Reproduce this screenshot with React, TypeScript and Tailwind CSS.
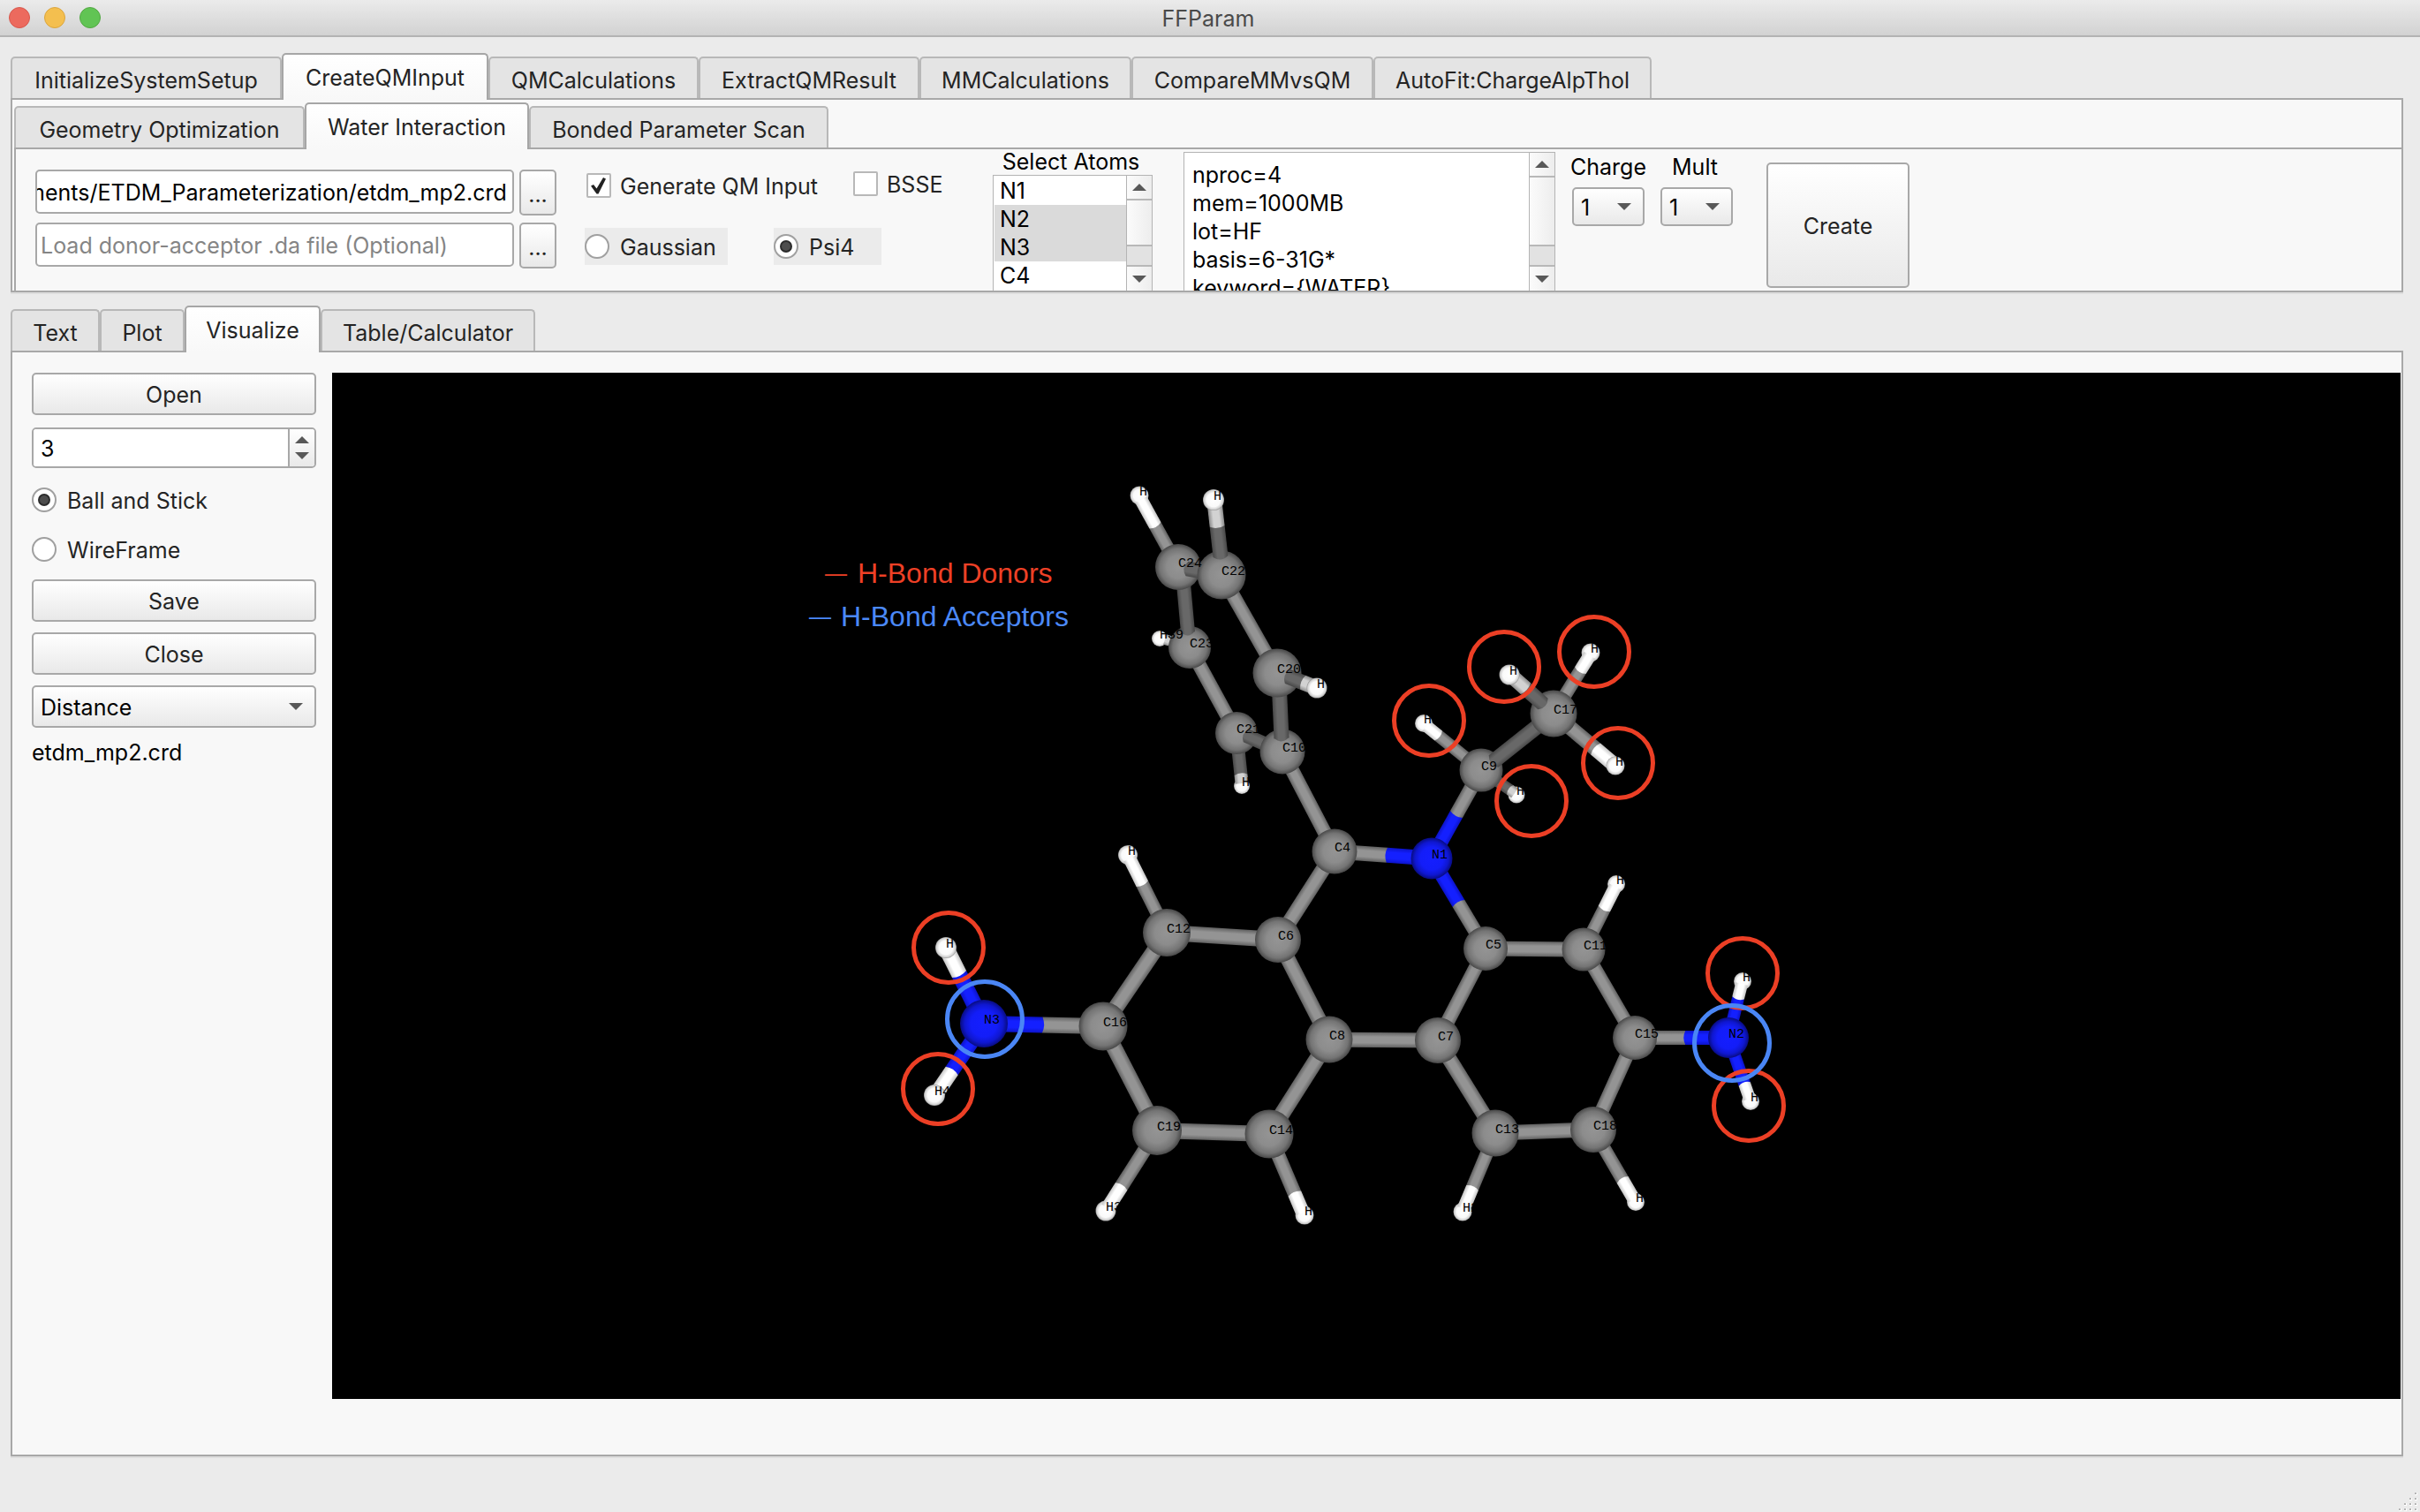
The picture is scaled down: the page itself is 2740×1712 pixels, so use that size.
import React, { useLayoutEffect, useRef } from "react";

/* ---------- Shared controls ---------- */

type Tab = { label: string; width: string };

function TabBar({ tabs, active, label }: { tabs: Tab[]; active: number; label: string }) {
  return (
    <div role="tablist" aria-label={label} className="relative z-10 -mb-[2px] flex h-[53px] items-end">
      {tabs.map((t, i) =>
        i === active ? (
          <button
            key={t.label}
            role="tab"
            aria-selected="true"
            className={`${t.width} relative z-10 h-[53px] rounded-t-[5px] border-2 border-b-0 border-[#a6a6a6] bg-linear-to-b from-white to-[#f8f8f8] text-center whitespace-nowrap`}
          >
            {t.label}
          </button>
        ) : (
          <button
            key={t.label}
            role="tab"
            aria-selected="false"
            className={`${t.width} mb-[2px] h-[47px] rounded-t-[5px] border-2 border-b-0 border-[#b8b8b8] bg-[#e4e4e4] pt-1 text-center whitespace-nowrap`}
          >
            {t.label}
          </button>
        )
      )}
    </div>
  );
}

function PushButton({ children, className }: { children: React.ReactNode; className: string }) {
  return (
    <button
      className={`${className} shrink-0 rounded-[5px] border-2 border-[#a8a8a8] bg-linear-to-b from-white to-[#e9e9e9]`}
    >
      {children}
    </button>
  );
}

function Arrow({ up }: { up?: boolean }) {
  return (
    <svg width="16" height="8" viewBox="0 0 16 8" className="pointer-events-none block" aria-hidden="true">
      <path d={up ? "M0 8 8 0l8 8z" : "M0 0h16L8 8z"} fill="#585858" />
    </svg>
  );
}

function Check({ id, label, checked }: { id: string; label: string; checked?: boolean }) {
  return (
    <label htmlFor={id} className="flex h-7 items-center gap-[10px] whitespace-nowrap">
      <span className="relative block size-7 shrink-0">
        <input
          id={id}
          type="checkbox"
          defaultChecked={checked}
          className="peer block size-7 appearance-none rounded-[2px] border-2 border-[#b8b8b8] bg-white"
        />
        <svg
          viewBox="0 0 28 28"
          className="pointer-events-none absolute inset-0 hidden size-7 peer-checked:block"
          aria-hidden="true"
        >
          <path d="M5 14.500 8 13l3.500 4.500L19 5l3 1.500-8.500 17h-2z" fill="#222" />
        </svg>
      </span>
      <span className="pt-[2px]">{label}</span>
    </label>
  );
}

function Radio({
  id,
  name,
  label,
  checked,
  className,
}: {
  id: string;
  name: string;
  label: string;
  checked?: boolean;
  className: string;
}) {
  return (
    <label htmlFor={id} className={`${className} flex items-center gap-[12px] whitespace-nowrap`}>
      <span className="relative block size-7 shrink-0">
        <input
          id={id}
          name={name}
          type="radio"
          defaultChecked={checked}
          className="peer block size-7 appearance-none rounded-full border-2 border-[#a0a0a0] bg-white"
        />
        <span className="pointer-events-none absolute inset-[7px] hidden rounded-full border-2 border-[#2c2c2c] bg-[#4d4d4d] peer-checked:block" />
      </span>
      <span className="pt-[2px]">{label}</span>
    </label>
  );
}

function Combo({ id, options, label, className }: { id: string; options: string[]; label: string; className: string }) {
  return (
    <div className={`${className} relative shrink-0`}>
      <select
        id={id}
        aria-label={label}
        className="block size-full appearance-none rounded-[5px] border-2 border-[#a8a8a8] bg-linear-to-b from-white to-[#e9e9e9] pt-[2px] pl-2 text-black"
      >
        {options.map((o) => (
          <option key={o}>{o}</option>
        ))}
      </select>
      <span className="pointer-events-none absolute inset-y-0 right-[15px] flex items-center">
        <Arrow />
      </span>
    </div>
  );
}

function ScrollBar({ className }: { className: string }) {
  return (
    <div className={`${className} flex w-[29px] shrink-0 flex-col border-l border-[#b4b4b4] bg-linear-to-r from-[#fbfbfb] to-[#ededed]`}>
      <button aria-label="Scroll up" className="flex h-[28px] items-center justify-center border-b-2 border-[#b8b8b8]">
        <Arrow up />
      </button>
      <div className="flex-1" />
      <div className="h-[25px] border-y-2 border-[#b8b8b8] bg-[#e2e2e2]" />
      <button aria-label="Scroll down" className="flex h-[28px] items-center justify-center">
        <Arrow />
      </button>
    </div>
  );
}

/* ---------- Molecule ---------- */

type Atom = { el: "C" | "N" | "H"; x: number; y: number; r: number; label: string };
type Shade = "gray" | "dark" | "white" | "dim" | "blue";
type Bond = {
  from: [number, number];
  to: [number, number];
  w: number;
  /* shade at each end and where along the bond the shade changes */
  a: Shade;
  b?: Shade;
  split?: number;
};

const atom = (el: Atom["el"], x: number, y: number, r: number, label: string): Atom => ({ el, x, y, r, label });
const bond = (
  from: [number, number],
  to: [number, number],
  w: number,
  a: Shade,
  b?: Shade,
  split = 0.5
): Bond => ({ from, to, w, a, b, split });

/* Back-to-front drawing order. */
const SCENE: (Atom | Bond)[] = [
  // planar ring bonds
  bond([1511, 964], [1621, 972], 17, "gray", "blue", 0.54),
  bond([1511, 964], [1447, 1064], 17, "gray"),
  bond([1452, 851], [1511, 964], 16, "gray"),
  bond([1447, 1064], [1321, 1056], 18, "gray"),
  bond([1447, 1064], [1505, 1177], 17, "gray"),
  bond([1321, 1056], [1249, 1162], 18, "gray"),
  bond([1249, 1162], [1310, 1280], 18, "gray"),
  bond([1310, 1280], [1437, 1284], 18, "gray"),
  bond([1437, 1284], [1505, 1177], 18, "gray"),
  bond([1505, 1177], [1628, 1178], 17, "gray"),
  bond([1628, 1178], [1682, 1074], 16, "gray"),
  bond([1628, 1178], [1693, 1283], 17, "gray"),
  bond([1693, 1283], [1804, 1279], 17, "gray"),
  bond([1804, 1279], [1851, 1175], 16, "gray"),
  bond([1851, 1175], [1793, 1075], 16, "gray"),
  bond([1793, 1075], [1682, 1074], 17, "gray"),
  bond([1621, 972], [1682, 1074], 16, "blue", "gray", 0.5),
  bond([1621, 972], [1677, 872], 16, "blue", "gray", 0.5),
  bond([1249, 1162], [1114, 1159], 18, "gray", "blue", 0.51),
  bond([1851, 1175], [1957, 1175], 16, "gray", "blue", 0.54),
  // hydrogens that sit behind their bonds
  atom("H", 1290, 561, 10.5, "H"),
  atom("H", 1313, 723, 9, "H39"),
  atom("H", 1406, 890, 9, "H"),
  atom("H", 1612, 819, 10, "H"),
  atom("H", 1801, 739, 10.5, "H"),
  atom("H", 1717, 900, 9.5, "H"),
  atom("H", 1830, 1001, 10, "H"),
  atom("H", 1277, 968, 11, "H"),
  atom("H", 1973, 1111, 10, "H"),
  atom("H", 1852, 1361, 10, "H"),
  atom("H", 1982, 1247, 10, "H"),
  atom("H", 1656, 1372, 10.5, "H2"),
  atom("H", 1252, 1371, 11.5, "H3"),
  atom("H", 1477, 1376, 10.5, "H"),
  bond([1334, 642], [1292, 566], 15, "gray", "white", 0.62),
  bond([1347, 733], [1319, 724], 12, "dark", "dim", 0.82),
  bond([1400, 830], [1406, 887], 15, "dark", "dim", 0.83),
  bond([1677, 872], [1615, 822], 14, "gray", "white", 0.78),
  bond([1759, 808], [1800, 742], 15, "gray", "white", 0.74),
  bond([1677, 872], [1715, 898], 13, "dark", "dim", 0.86),
  bond([1793, 1075], [1829, 1004], 15, "gray", "white", 0.65),
  bond([1321, 1056], [1279, 972], 15, "gray", "white", 0.66),
  bond([1957, 1175], [1972, 1114], 14, "blue", "white", 0.74),
  bond([1957, 1175], [1981, 1244], 14, "blue", "white", 0.76),
  bond([1804, 1279], [1850, 1358], 15, "gray", "white", 0.72),
  bond([1693, 1283], [1657, 1369], 15, "gray", "white", 0.72),
  bond([1310, 1280], [1254, 1368], 16, "gray", "white", 0.72),
  bond([1437, 1284], [1475, 1373], 16, "gray", "white", 0.76),
  bond([1114, 1159], [1071, 1073], 18, "blue", "white", 0.65),
  bond([1114, 1159], [1059, 1240], 17, "blue", "white", 0.66),
  bond([1759, 808], [1829, 867], 17, "gray", "white", 0.68),
  atom("H", 1071, 1073, 12, "H"),
  atom("H", 1058, 1240, 12, "H4"),
  atom("H", 1829, 867, 10.5, "H"),
  // phenyl group
  bond([1347, 733], [1400, 830], 16, "gray"),
  atom("C", 1347, 733, 24, "C23"),
  bond([1339, 650], [1345, 716], 16, "dark"),
  atom("C", 1334, 642, 26, "C24"),
  bond([1344, 644], [1384, 651], 17, "dark"),
  bond([1383, 651], [1446, 762], 16, "gray"),
  atom("C", 1383, 651, 27.5, "C22"),
  bond([1382, 630], [1375, 568], 17, "dark", "dim", 0.55),
  atom("H", 1374, 566, 12, "H"),
  atom("C", 1400, 830, 24, "C21"),
  bond([1411, 833], [1452, 851], 16, "dark"),
  atom("C", 1452, 851, 25.5, "C10"),
  bond([1448, 770], [1451, 836], 17, "dark"),
  atom("C", 1446, 762, 27.5, "C20"),
  bond([1458, 766], [1491, 779], 17, "dark", "dim", 0.52),
  atom("H", 1491, 779, 11.5, "H"),
  // ethyl group
  atom("C", 1677, 872, 24.5, "C9"),
  bond([1691, 862], [1759, 808], 17, "dark"),
  atom("C", 1759, 808, 26.5, "C17"),
  bond([1747, 797], [1712, 766], 17, "dark", "dim", 0.56),
  atom("H", 1709, 764, 11.5, "H"),
  // fused rings
  atom("C", 1511, 964, 25.5, "C4"),
  atom("N", 1621, 972, 23.5, "N1"),
  atom("C", 1682, 1074, 25, "C5"),
  atom("C", 1793, 1075, 24.5, "C11"),
  atom("C", 1447, 1064, 26, "C6"),
  atom("C", 1321, 1056, 27, "C12"),
  atom("C", 1249, 1162, 27.5, "C16"),
  atom("C", 1310, 1280, 28, "C19"),
  atom("C", 1437, 1284, 27.5, "C14"),
  atom("C", 1505, 1177, 26.5, "C8"),
  atom("C", 1628, 1178, 26, "C7"),
  atom("C", 1693, 1283, 26.5, "C13"),
  atom("C", 1804, 1279, 26, "C18"),
  atom("C", 1851, 1175, 25, "C15"),
  atom("N", 1957, 1175, 23, "N2"),
  atom("N", 1114, 1159, 27, "N3"),
];

const DONORS: [number, number][] = [
  [1618, 816],
  [1703, 755],
  [1805, 738],
  [1832, 864],
  [1734, 907],
  [1973, 1102],
  [1980, 1252],
  [1074, 1073],
  [1062, 1233],
];
const ACCEPTORS: [number, number][] = [
  [1115, 1154],
  [1961, 1181],
];

const SHADES: Record<Shade, [string, string]> = {
  gray: ["#949494", "#606060"],
  dark: ["#686868", "#484848"],
  white: ["#ffffff", "#c4c4c4"],
  dim: ["#d2d2d2", "#8a8a8a"],
  blue: ["#1420ff", "#0c13c8"],
};

function BondShape({ b }: { b: Bond }) {
  const dx = b.to[0] - b.from[0];
  const dy = b.to[1] - b.from[1];
  const len = Math.hypot(dx, dy);
  const angle = (Math.atan2(dy, dx) * 180) / Math.PI;
  const cut = b.b ? len * (b.split ?? 0.5) : len;
  const h = b.w / 2;
  return (
    <g transform={`translate(${b.from[0]} ${b.from[1]}) rotate(${angle})`}>
      <path d={`M0 ${-h}H${cut}V${h}H0Q-7 0 0 ${-h}z`} fill={`url(#bond-${b.a})`} />
      {b.b ? (
        <path d={`M${cut} ${-h}H${len}V${h}H${cut}Q${cut - 4} 0 ${cut} ${-h}z`} fill={`url(#bond-${b.b})`} />
      ) : (
        <path d={`M${cut - 1} ${-h}Q${cut + 8} 0 ${cut - 1} ${h}z`} fill={`url(#bond-${b.a})`} />
      )}
    </g>
  );
}

function Molecule() {
  return (
    <svg viewBox="376 422 2342 1162" className="block h-auto w-full" role="img" aria-label="Ball and stick molecule">
      <defs>
        {(Object.keys(SHADES) as Shade[]).map((k) => (
          <linearGradient key={k} id={`bond-${k}`} x1="0" y1="0" x2="0" y2="1">
            <stop offset="0" stopColor={SHADES[k][1]} />
            <stop offset="0.3" stopColor={SHADES[k][0]} />
            <stop offset="0.7" stopColor={SHADES[k][0]} />
            <stop offset="1" stopColor={SHADES[k][1]} />
          </linearGradient>
        ))}
        <radialGradient id="atom-C">
          <stop offset="0" stopColor="#949494" />
          <stop offset="0.5" stopColor="#8c8c8c" />
          <stop offset="0.8" stopColor="#747474" />
          <stop offset="1" stopColor="#484848" />
        </radialGradient>
        <radialGradient id="atom-N">
          <stop offset="0" stopColor="#141eff" />
          <stop offset="0.55" stopColor="#131df8" />
          <stop offset="0.8" stopColor="#0f17d0" />
          <stop offset="1" stopColor="#080c80" />
        </radialGradient>
        <radialGradient id="atom-H">
          <stop offset="0" stopColor="#ffffff" />
          <stop offset="0.65" stopColor="#fafafa" />
          <stop offset="0.9" stopColor="#d0d0d0" />
          <stop offset="1" stopColor="#949494" />
        </radialGradient>
      </defs>

      {SCENE.map((s, i) =>
        "el" in s ? <circle key={i} cx={s.x} cy={s.y} r={s.r} fill={`url(#atom-${s.el})`} /> : <BondShape key={i} b={s} />
      )}

      <g fill="#000" fontFamily="'Liberation Mono', monospace" fontSize="15">
        {SCENE.map((s, i) =>
          "el" in s ? (
            <text key={i} x={s.x} y={s.y}>
              {s.label}
            </text>
          ) : null
        )}
      </g>

      <g fill="none" stroke="#ec3f25" strokeWidth="5">
        {DONORS.map(([x, y]) => (
          <circle key={`${x}-${y}`} cx={x} cy={y} r="39.500" />
        ))}
      </g>
      <g fill="none" stroke="#4a86f5" strokeWidth="5">
        {ACCEPTORS.map(([x, y]) => (
          <circle key={`${x}-${y}`} cx={x} cy={y} r="42.500" />
        ))}
      </g>

      <g fontFamily="'Liberation Sans', Arial, sans-serif" fontSize="32">
        <g fill="#ee4026">
          <text x="934" y="658" fontSize="25">—</text>
          <text x="971" y="660">H-Bond Donors</text>
        </g>
        <g fill="#4b89f8">
          <text x="916" y="707" fontSize="25">—</text>
          <text x="952" y="709">H-Bond Acceptors</text>
        </g>
      </g>
    </svg>
  );
}

/* ---------- Page ---------- */

const MAIN_TABS: Tab[] = [
  { label: "InitializeSystemSetup", width: "w-[307px]" },
  { label: "CreateQMInput", width: "w-[234px]" },
  { label: "QMCalculations", width: "w-[238px]" },
  { label: "ExtractQMResult", width: "w-[250px]" },
  { label: "MMCalculations", width: "w-[240px]" },
  { label: "CompareMMvsQM", width: "w-[274px]" },
  { label: "AutoFit:ChargeAlpThol", width: "w-[315px]" },
];
const QM_TABS: Tab[] = [
  { label: "Geometry Optimization", width: "w-[329px]" },
  { label: "Water Interaction", width: "w-[254px]" },
  { label: "Bonded Parameter Scan", width: "w-[339px]" },
];
const VIEW_TABS: Tab[] = [
  { label: "Text", width: "w-[101px]" },
  { label: "Plot", width: "w-[96px]" },
  { label: "Visualize", width: "w-[154px]" },
  { label: "Table/Calculator", width: "w-[243px]" },
];

const ATOMS = [
  { name: "N1", on: false },
  { name: "N2", on: true },
  { name: "N3", on: true },
  { name: "C4", on: false },
];

export default function App() {
  const pathRef = useRef<HTMLInputElement>(null);
  useLayoutEffect(() => {
    const el = pathRef.current;
    if (el) el.scrollLeft = el.scrollWidth;
  }, []);

  return (
    <div className="flex min-h-screen flex-col bg-[#ebebeb] font-['Inter',sans-serif] text-[25px] leading-8 text-[#242424]">
      <header className="relative flex h-[42px] items-center justify-center border-b-2 border-[#b3b3b3] bg-linear-to-b from-[#ebebeb] to-[#d2d2d2]">
        <div className="absolute left-[10px] flex gap-4">
          <button aria-label="Close window" className="size-6 rounded-full border border-[#d8574c] bg-[#ec6a5e]" />
          <button aria-label="Minimize window" className="size-6 rounded-full border border-[#dba53c] bg-[#f4bf4f]" />
          <button aria-label="Zoom window" className="size-6 rounded-full border border-[#52a842] bg-[#61c454]" />
        </div>
        <h1 className="pt-[2px] pr-1 text-[#4a4a4a]">FFParam</h1>
      </header>

      <main className="flex flex-1 flex-col pt-[18px] pr-[19px] pb-[63px] pl-[12px]">
        <TabBar tabs={MAIN_TABS} active={1} label="Workflow" />
        <section className="border-2 border-[#a8a8a8] bg-[#f8f8f8] pt-[3px] pl-[2px] shadow-[0_2px_0_#dedede]">
          <TabBar tabs={QM_TABS} active={1} label="QM input" />
          <div className="flex h-[162px] items-start overflow-hidden border-t-2 border-l-2 border-[#a8a8a8]">
            <div className="ml-[22px] flex flex-col gap-2 pt-[23px]">
              <div className="flex items-start gap-[6px]">
                <input
                  ref={pathRef}
                  aria-label="Coordinate file"
                  defaultValue="Documents/ETDM_Parameterization/etdm_mp2.crd"
                  className="h-[50px] w-[542px] rounded-[5px] border-2 border-[#a8a8a8] bg-white pt-[2px] pr-1.5 text-black"
                />
                <PushButton className="h-[52px] w-[42px] pt-1">...</PushButton>
              </div>
              <div className="flex items-start gap-[6px]">
                <input
                  aria-label="Donor-acceptor file"
                  placeholder="Load donor-acceptor .da file (Optional)"
                  className="h-[50px] w-[542px] rounded-[5px] border-2 border-[#a8a8a8] bg-white px-1 pt-[2px] text-black placeholder:text-[#858585]"
                />
                <PushButton className="h-[52px] w-[42px] pt-1">...</PushButton>
              </div>
            </div>

            <div className="ml-[32px] w-[462px] pt-[25px]">
              <div className="flex items-start pl-[2px]">
                <div className="w-[302px] pt-[2px]">
                  <Check id="generate" label="Generate QM Input" checked />
                </div>
                <Check id="bsse" label="BSSE" />
              </div>
              <div className="mt-[34px] flex gap-[52px]">
                <Radio id="gaussian" name="program" label="Gaussian" className="h-[42px] w-[162px] bg-[#ebebeb]" />
                <Radio id="psi4" name="program" label="Psi4" checked className="h-[42px] w-[122px] bg-[#ebebeb]" />
              </div>
            </div>

            <div className="w-[181px] text-black">
              <div id="atoms-label" className="pr-1 text-center leading-[29px]">
                Select Atoms
              </div>
              <div className="flex h-[136px] border border-[#b4b4b4] bg-white">
                <ul role="listbox" aria-multiselectable="true" aria-labelledby="atoms-label" className="flex-1 pt-px pl-px">
                  {ATOMS.map((a) => (
                    <li
                      key={a.name}
                      role="option"
                      aria-selected={a.on}
                      className={a.on ? "h-8 bg-[#dadada] pl-[6px]" : "h-8 pl-[6px]"}
                    >
                      {a.name}
                    </li>
                  ))}
                </ul>
                <ScrollBar className="h-[131px]" />
              </div>
            </div>

            <div className="mt-[3px] ml-[35px] flex h-[164px] w-[421px] border border-[#b4b4b4] bg-white">
              <textarea
                aria-label="QM settings"
                defaultValue={"nproc=4\nmem=1000MB\nlot=HF\nbasis=6-31G*\nkeyword={WATER}"}
                className="flex-1 resize-none overflow-hidden pt-[9px] pl-[9px] leading-8 text-black"
              />
              <ScrollBar className="h-[157px]" />
            </div>

            <div className="ml-[19px] flex gap-[18px] pt-1 text-black">
              <div className="flex w-[82px] flex-col items-center gap-[7px]">
                <label htmlFor="charge">Charge</label>
                <Combo id="charge" label="Charge" options={["1", "0", "2"]} className="h-[44px] w-full" />
              </div>
              <div className="flex w-[82px] flex-col items-center gap-[7px]">
                <label htmlFor="mult" className="pr-1">
                  Mult
                </label>
                <Combo id="mult" label="Mult" options={["1", "2", "3"]} className="h-[44px] w-full" />
              </div>
            </div>

            <PushButton className="mt-[15px] ml-[38px] h-[142px] w-[162px] pt-[2px]">Create</PushButton>
          </div>
        </section>

        <div className="mt-[15px]">
          <TabBar tabs={VIEW_TABS} active={2} label="Views" />
        </div>
        <section className="flex flex-1 items-start gap-[18px] border-2 border-[#a8a8a8] bg-[#f8f8f8] pt-[23px] pr-px pl-[22px] shadow-[0_2px_0_#dedede]">
          <div className="flex w-[322px] shrink-0 flex-col">
            <PushButton className="h-[48px] pt-[2px]">Open</PushButton>
            <div className="mt-[14px] flex h-[46px] overflow-hidden rounded-[5px] border-2 border-[#a8a8a8] bg-white">
              <input aria-label="Label size" defaultValue="3" className="w-0 flex-1 bg-white pt-[2px] pl-2 text-black" />
              <div className="flex w-[30px] flex-col items-center justify-center gap-[10px] border-l-2 border-[#a8a8a8] bg-linear-to-b from-white to-[#e9e9e9]">
                <button aria-label="Increase">
                  <Arrow up />
                </button>
                <button aria-label="Decrease">
                  <Arrow />
                </button>
              </div>
            </div>
            <Radio id="ball" name="style" label="Ball and Stick" checked className="mt-[22px] h-7" />
            <Radio id="wire" name="style" label="WireFrame" className="mt-[28px] h-7" />
            <PushButton className="mt-[20px] h-[48px] pt-[2px]">Save</PushButton>
            <PushButton className="mt-3 h-[48px] pt-[2px]">Close</PushButton>
            <Combo id="measure" label="Measurement" options={["Distance", "Angle", "Dihedral"]} className="mt-3 h-[48px] w-full" />
            <p className="mt-3 text-black">etdm_mp2.crd</p>
          </div>
          <div className="min-w-0 flex-1 bg-black">
            <Molecule />
          </div>
        </section>
      </main>

      <svg className="pointer-events-none fixed right-0 bottom-0" width="26" height="24" viewBox="0 0 26 24" aria-hidden="true">
        {[0, 1, 2, 3].map((row) =>
          Array.from({ length: row + 1 }, (_, c) => (
            <g key={`${row}-${c}`}>
              <rect x={20 - c * 6} y={2 + row * 6} width="3" height="3" fill="#fff" />
              <rect x={20 - c * 6} y={2 + row * 6} width="2" height="2" fill="#b5b5b5" />
            </g>
          ))
        )}
      </svg>
    </div>
  );
}
